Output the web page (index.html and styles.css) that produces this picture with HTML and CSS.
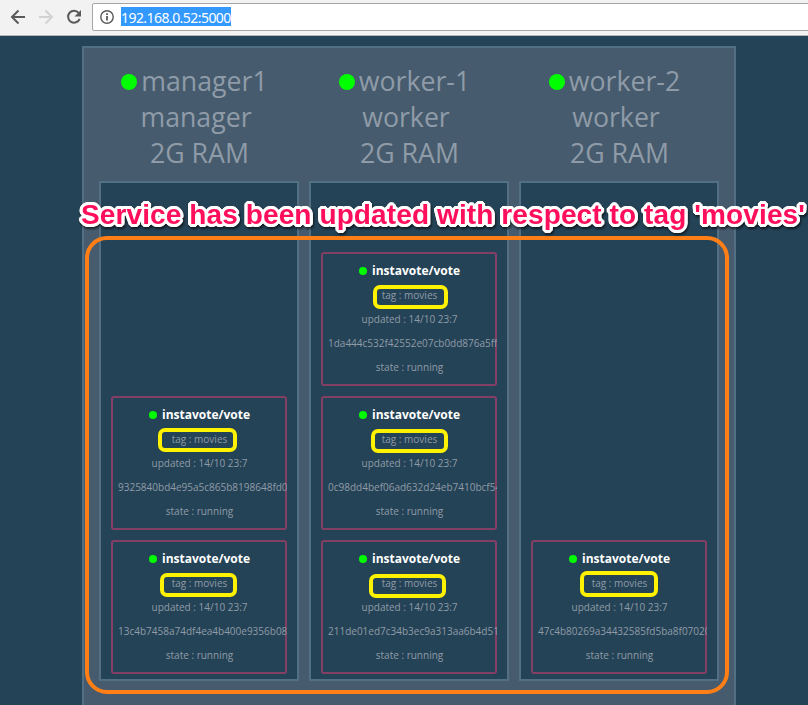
FILE: index.html
```html
<!DOCTYPE html>
<html lang="en">
<head>
<meta charset="utf-8">
<title>Visualizer</title>
<link rel="stylesheet" href="styles.css">
</head>
<body>
<header class="toolbar">
  <svg class="nav" width="92" height="35" viewBox="0 0 92 35" fill="none" stroke="#5a5a5a" stroke-width="2">
    <path d="M25 17H12.5M18.5 10.5L12 17l6.500 6.500"/>
    <path d="M39 17H51.500M45.500 10.500L52 17l-6.500 6.500" stroke="#d2d2d2"/>
    <path d="M78.700 12.800A6 6 0 1 0 79.700 18.800"/>
    <path d="M81 10v6.500h-6.500z" fill="#5a5a5a" stroke="none"/>
  </svg>
  <div class="address">
    <svg width="14" height="14" viewBox="0 0 14 14" fill="none" stroke="#5a5a5a"><circle cx="7" cy="7" r="6.200" stroke-width="1.400"/><path d="M7 6v4.500M7 3.200v1.800" stroke-width="1.800"/></svg>
    <span class="url">192.168.0.52:5000</span>
  </div>
</header>
<main class="cluster">
  <section class="node">
    <div class="node-head"><div class="host"><i class="dot big"></i>manager1</div><div class="role">manager</div><div class="ram">2G RAM</div></div>
    <div class="tasks">
      <article class="task"><h3><i class="dot"></i>instavote/vote</h3><p>tag : movies</p><p>updated : 14/10 23:7</p><p class="hash">9325840bd4e95a5c865b8198648fd0</p><p>state : running</p><span class="mark m2"></span></article>
      <article class="task"><h3><i class="dot"></i>instavote/vote</h3><p>tag : movies</p><p>updated : 14/10 23:7</p><p class="hash">13c4b7458a74df4ea4b400e9356b08</p><p>state : running</p><span class="mark m3"></span></article>
    </div>
  </section>
  <section class="node">
    <div class="node-head"><div class="host"><i class="dot big"></i>worker-1</div><div class="role">worker</div><div class="ram">2G RAM</div></div>
    <div class="tasks">
      <article class="task"><h3><i class="dot"></i>instavote/vote</h3><p>tag : movies</p><p>updated : 14/10 23:7</p><p class="hash">1da444c532f42552e07cb0dd876a5ff</p><p>state : running</p><span class="mark m1"></span></article>
      <article class="task"><h3><i class="dot"></i>instavote/vote</h3><p>tag : movies</p><p>updated : 14/10 23:7</p><p class="hash">0c98dd4bef06ad632d24eb7410bcf54</p><p>state : running</p><span class="mark m4"></span></article>
      <article class="task"><h3><i class="dot"></i>instavote/vote</h3><p>tag : movies</p><p>updated : 14/10 23:7</p><p class="hash">211de01ed7c34b3ec9a313aa6b4d51</p><p>state : running</p><span class="mark m5"></span></article>
    </div>
  </section>
  <section class="node">
    <div class="node-head"><div class="host"><i class="dot big"></i>worker-2</div><div class="role">worker</div><div class="ram">2G RAM</div></div>
    <div class="tasks">
      <article class="task"><h3><i class="dot"></i>instavote/vote</h3><p>tag : movies</p><p>updated : 14/10 23:7</p><p class="hash">47c4b80269a34432585fd5ba8f07020</p><p>state : running</p><span class="mark m6"></span></article>
    </div>
  </section>
</main>
<div class="frame"></div>
<div class="caption">Service has been updated with respect to tag 'movies'</div>
</body>
</html>
```
FILE: styles.css
```css
* { box-sizing: border-box; }
body { margin: 0; height: 705px; overflow: hidden; position: relative; background: #254356; font-family: "Open Sans", sans-serif; color: #8f9ba8; }
.toolbar { display: flex; height: 36px; background: #f2f2f2; border-bottom: 1px solid #b5b5b5; overflow: hidden; }
.nav { flex: none; }
.address { flex: none; display: flex; align-items: center; width: 740px; height: 28px; margin-top: 3px; padding-left: 7px; background: #fff; border: 1px solid #a6a6a6; border-radius: 2px; }
.url { margin-left: 7px; height: 19px; margin-top: -2px; font: 14px/21px "Noto Sans", sans-serif; letter-spacing: -0.550px; color: #fff; background: #3399ff; white-space: nowrap; width: 110px; }
.cluster { display: flex; gap: 10px; width: 654px; height: 680px; margin: 10px 0 0 82px; padding: 15px; border: 2px solid #536f84; background: #465b6d; }
.node { width: 200px; }
.node-head { height: 118px; font-size: 26.700px; line-height: 36px; text-align: center; white-space: nowrap; padding-left: 1px; }
.host { padding-right: 10px; }
.role { padding-right: 7px; }
.dot { display: inline-block; width: 8px; height: 8px; margin-right: 5px; border-radius: 50%; background: #00ff00; }
.dot.big { width: 16px; height: 16px; margin-right: 4px; vertical-align: 1px; }
.tasks { display: flex; flex-direction: column; justify-content: flex-end; gap: 10px; height: 500px; padding: 0 10px 5px; border: 2px solid #536f84; background: #254356; }
.task { position: relative; height: 134px; padding: 5px 5px 5px 6px; border: 2px solid #843f65; border-radius: 3px; text-align: center; }
h3, p { margin: 0; height: 24px; font-size: 10px; line-height: 24px; white-space: nowrap; }
h3 { font-size: 12px; font-weight: 700; color: #fff; }
.hash { position: relative; margin-left: -1px; margin-right: -7px; text-align: left; overflow: hidden; }
.mark { position: absolute; border: 4px solid #fff200; border-radius: 7px; }
.m1 { left: 50px; top: 31px; width: 75px; height: 24px; }
.m2 { left: 45px; top: 30px; width: 79px; height: 24px; }
.m3 { left: 47px; top: 31px; width: 77px; height: 24px; }
.m4 { left: 48px; top: 31px; width: 77px; height: 24px; }
.m5 { left: 46px; top: 32px; width: 77px; height: 24px; }
.m6 { left: 47px; top: 29px; width: 78px; height: 26px; }
.frame { position: absolute; left: 85px; top: 236px; width: 644px; height: 458px; border: 4px solid #ff7f16; border-radius: 22px; }
.caption { position: absolute; left: 81px; top: 199px; font: bold 28px/32px "Liberation Sans", Arial, sans-serif; letter-spacing: 0.110px; color: #ff0f5b; white-space: nowrap; text-shadow: 3px 0 #fff, -3px 0 #fff, 0 3px #fff, 0 -3px #fff, 2px 2px #fff, -2px 2px #fff, 2px -2px #fff, -2px -2px #fff, 3px 1px #fff, 3px -1px #fff, -3px 1px #fff, -3px -1px #fff, 1px 3px #fff, -1px 3px #fff, 1px -3px #fff, -1px -3px #fff; filter: drop-shadow(1px 2px 1px rgba(0,0,0,.6)); }
```
